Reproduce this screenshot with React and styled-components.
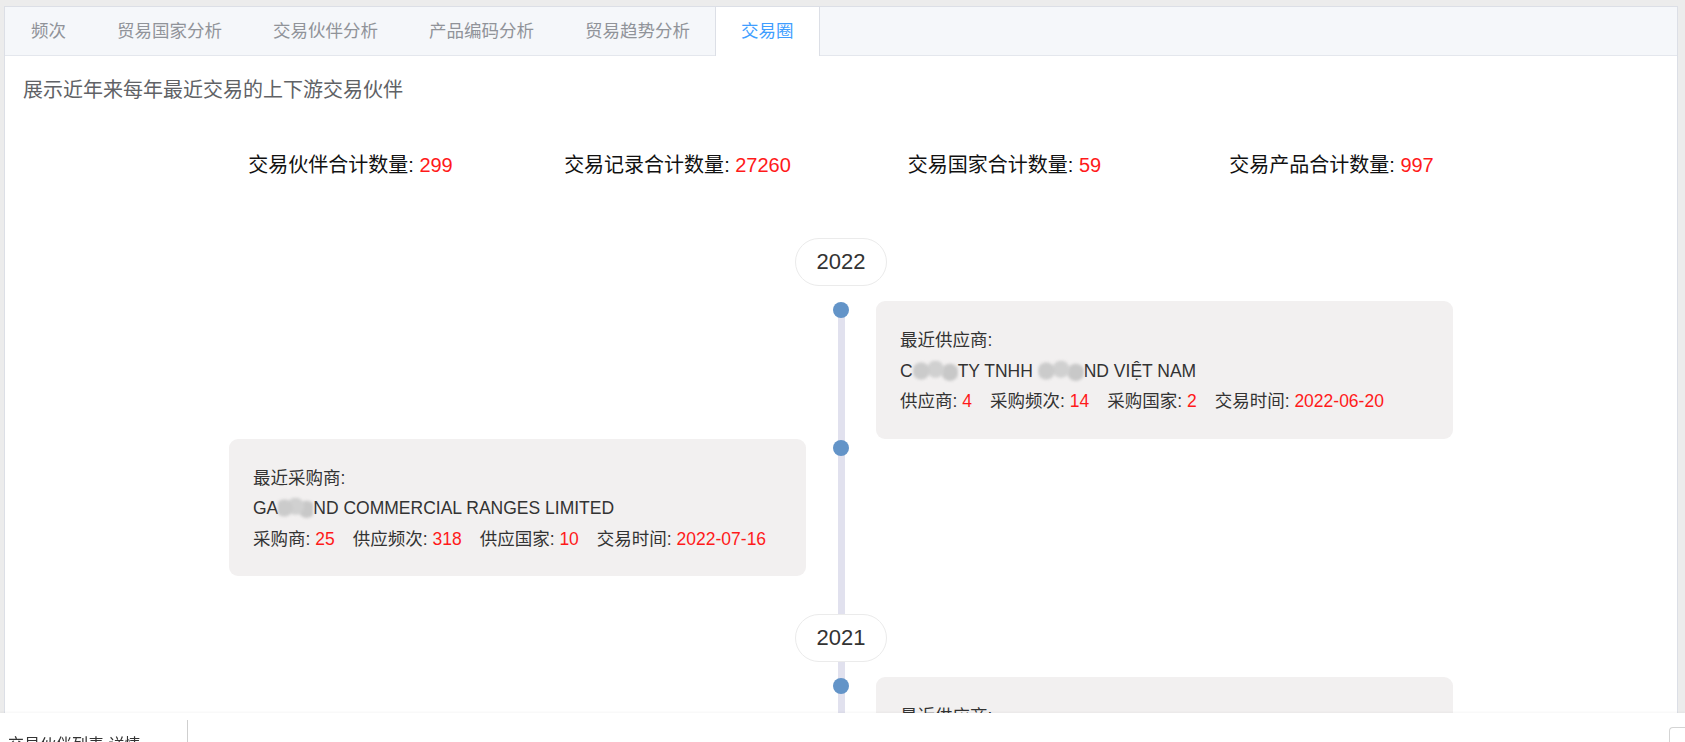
import React from 'react';
import styled, { createGlobalStyle } from 'styled-components';

const GlobalStyle = createGlobalStyle`
  html, body {
    margin: 0;
    padding: 0;
    overflow: hidden;
    background: #ececec;
    font-family: "Liberation Sans", "Noto Sans CJK SC", sans-serif;
  }
  * {
    box-sizing: border-box;
  }
`;

const Panel = styled.div`
  margin: 6px 7px 0 4px;
  background: #fff;
  border: 1px solid #dcdfe6;
  min-height: 900px;
`;

const TabBar = styled.div`
  display: flex;
  height: 49px;
  background: #f5f7fa;
  border-bottom: 1px solid #e4e7ed;
`;

const Tab = styled.div`
  padding: 0 25px;
  height: 49px;
  line-height: 48px;
  font-size: 17.5px;
  color: ${(props) => (props.active ? '#409eff' : '#909399')};
  background: ${(props) => (props.active ? '#fff' : 'transparent')};
  border-left: 1px solid ${(props) => (props.active ? '#dcdfe6' : 'transparent')};
  border-right: 1px solid ${(props) => (props.active ? '#dcdfe6' : 'transparent')};
  margin-left: ${(props) => (props.first ? '0' : '-1px')};
  cursor: pointer;
`;

const Content = styled.div`
  padding: 0 18px;
`;

const Description = styled.div`
  margin-top: 21px;
  font-size: 20px;
  line-height: 26px;
  color: #606266;
`;

const Stats = styled.div`
  width: 1308px;
  margin: 48px auto 0;
  display: grid;
  grid-template-columns: repeat(4, 1fr);
`;

const Stat = styled.div`
  text-align: center;
  font-size: 20px;
  line-height: 28px;
  color: #111;
`;

const Red = styled.span`
  color: #ff1a1a;
`;

const Timeline = styled.div`
  margin-top: 59px;
  display: flex;
  flex-direction: column;
  align-items: center;
`;

const YearPill = styled.div`
  position: relative;
  z-index: 1;
  height: 48px;
  padding: 0 21px;
  line-height: 46px;
  font-size: 22px;
  color: #333;
  background: #fff;
  border: 1px solid #ebebeb;
  border-radius: 24px;
  margin-top: ${(props) => props.gap || 0}px;
`;

const Track = styled.div`
  position: relative;
  margin-top: 15px;
  display: flex;
  flex-direction: column;
  align-items: center;

  &::before {
    content: '';
    position: absolute;
    top: 2px;
    bottom: 0;
    left: 50%;
    width: 7px;
    margin-left: -3.5px;
    background: #e1e1ee;
  }
`;

const Entry = styled.div`
  position: relative;
  display: grid;
  grid-template-columns: 577px 70px 577px;
  margin-top: ${(props) => props.gap || 0}px;
`;

const Dot = styled.div`
  grid-column: 2;
  grid-row: 1;
  justify-self: center;
  width: 16px;
  height: 16px;
  margin-top: 1px;
  border-radius: 50%;
  background: #6394c8;
`;

const Card = styled.div`
  grid-column: ${(props) => (props.side === 'left' ? 1 : 3)};
  grid-row: 1;
  background: #f2f0f0;
  border-radius: 9px;
  padding: 24px 24px 22px;
  font-size: 17.5px;
  line-height: 30.5px;
  color: #333;
`;

const Line = styled.div`
  white-space: nowrap;
`;

const Item = styled.span`
  margin-right: 18px;
`;

const Blur = styled.span`
  display: inline-block;
  width: ${(props) => props.w}px;
  height: 22px;
  vertical-align: -5px;
  background:
    radial-gradient(circle at 18% 50%, #cbcbcb 7px, transparent 10px),
    radial-gradient(circle at 50% 42%, #d0d0d0 7px, transparent 10px),
    radial-gradient(circle at 82% 56%, #c8c8c8 7px, transparent 10px);
  filter: blur(1.2px);
`;

const Footer = styled.div`
  position: fixed;
  left: 0;
  right: 0;
  bottom: 0;
  height: 29px;
  background: #fff;
  display: flex;
  overflow: hidden;
  box-shadow: 0 -1px 2px rgba(0, 0, 0, 0.04);
`;

const FooterCell = styled.div`
  width: 188px;
  margin-top: 7px;
  padding: 17px 0 0 8px;
  border-right: 1px solid #cfcfcf;
  font-size: 16px;
  line-height: 16px;
  color: #333;
  white-space: nowrap;
`;

const FooterBox = styled.div`
  margin: 14px 0 0 auto;
  width: 16px;
  height: 30px;
  border: 1px solid #d4d4d4;
  border-right: none;
  border-radius: 4px 0 0 0;
`;

const tabs = ['频次', '贸易国家分析', '交易伙伴分析', '产品编码分析', '贸易趋势分析', '交易圈'];

const stats = [
  ['交易伙伴合计数量', '299'],
  ['交易记录合计数量', '27260'],
  ['交易国家合计数量', '59'],
  ['交易产品合计数量', '997'],
];

const Supplier = ({ freq, country, count, date, name }) => (
  <Card side="right">
    <Line>最近供应商:</Line>
    <Line>{name}</Line>
    <Line>
      <Item>供应商: <Red>{count}</Red></Item>
      <Item>采购频次: <Red>{freq}</Red></Item>
      <Item>采购国家: <Red>{country}</Red></Item>
      交易时间: <Red>{date}</Red>
    </Line>
  </Card>
);

const Buyer = ({ freq, country, count, date, name }) => (
  <Card side="left">
    <Line>最近采购商:</Line>
    <Line>{name}</Line>
    <Line>
      <Item>采购商: <Red>{count}</Red></Item>
      <Item>供应频次: <Red>{freq}</Red></Item>
      <Item>供应国家: <Red>{country}</Red></Item>
      交易时间: <Red>{date}</Red>
    </Line>
  </Card>
);

const App = () => (
  <React.Fragment>
    <GlobalStyle />
    <Panel>
      <TabBar>
        {tabs.map((t, i) => (
          <Tab key={t} first={i === 0} active={t === '交易圈'}>
            {t}
          </Tab>
        ))}
      </TabBar>
      <Content>
        <Description>展示近年来每年最近交易的上下游交易伙伴</Description>
        <Stats>
          {stats.map(([label, value]) => (
            <Stat key={label}>
              {label}: <Red>{value}</Red>
            </Stat>
          ))}
        </Stats>
        <Timeline>
          <YearPill>2022</YearPill>
          <Track>
            <Entry>
              <Dot />
              <Supplier
                name={
                  <>
                    C<Blur w={45} />TY TNHH <Blur w={46} />ND VIỆT NAM
                  </>
                }
                count="4"
                freq="14"
                country="2"
                date="2022-06-20"
              />
            </Entry>
            <Entry>
              <Dot />
              <Buyer
                name={
                  <>
                    GA<Blur w={35} />ND COMMERCIAL RANGES LIMITED
                  </>
                }
                count="25"
                freq="318"
                country="10"
                date="2022-07-16"
              />
            </Entry>
            <YearPill gap={38}>2021</YearPill>
            <Entry gap={15}>
              <Dot />
              <Supplier
                name="GARLAND COMMERCIAL INDUSTRIES"
                count="3"
                freq="22"
                country="2"
                date="2021-11-08"
              />
            </Entry>
          </Track>
        </Timeline>
      </Content>
    </Panel>
    <Footer>
      <FooterCell>交易伙伴列表 详情</FooterCell>
      <FooterBox />
    </Footer>
  </React.Fragment>
);

export default App;
